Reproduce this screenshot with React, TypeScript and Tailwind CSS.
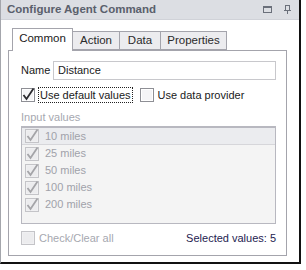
import React from "react"

const values = ["10 miles", "25 miles", "50 miles", "100 miles", "200 miles"]

function CheckBox({ checked, disabled }: { checked: boolean; disabled?: boolean }) {
  const border = disabled ? "#c4c4c8" : "#8e8f95"
  const mark = disabled ? "#a4a4a8" : "#2a2a2e"
  return (
    <svg width="14" height="14" viewBox="0 0 14 14" className="shrink-0 overflow-visible">
      <rect x="0.5" y="0.5" width="13" height="13" fill={disabled ? "#f0f0f2" : "#ffffff"} stroke={border} />
      <rect x="2" y="2" width="10" height="10" fill={disabled ? "#ececee" : "#f4f4f6"} />
      {checked && (
        <path d="M2.5 7 L5.5 11 L12.5 0.5" fill="none" stroke={mark} strokeWidth="1.8" strokeLinejoin="miter" />
      )}
    </svg>
  )
}

export default function App() {
  return (
    <div className="w-[306px] h-[270px] bg-white" style={{ fontFamily: "'Liberation Sans', Arial, sans-serif" }}>
      <div className="w-[301px] h-[264px] flex flex-col bg-white border-l border-[#a4a6ac] border-r-2 border-b-2 border-r-[#111] border-b-[#111]">
        {/* title bar */}
        <div className="h-[20px] bg-[#dcdee3] flex items-center pl-[6px] pr-[8px] border-b border-[#d0d2d8]">
          <span className="text-[11.5px] font-bold text-[#5a606c]">
            Configure Agent Command
          </span>
          <div className="ml-auto flex items-center gap-[12px]">
            <svg width="9" height="7" viewBox="0 0 9 7">
              <rect x="0.5" y="0.5" width="8" height="6" fill="none" stroke="#6a6f7a" />
              <rect x="0" y="0" width="9" height="2" fill="#6a6f7a" />
            </svg>
            <svg width="7" height="9" viewBox="0 0 7 9">
              <rect x="1.5" y="0.5" width="4" height="5" fill="none" stroke="#6a6f7a" />
              <rect x="0" y="5" width="7" height="1" fill="#6a6f7a" />
              <rect x="3" y="6" width="1" height="3" fill="#6a6f7a" />
            </svg>
          </div>
        </div>

        <div className="pt-[8px] pl-[7px] text-[11px] text-[#1a1a1a]">
          {/* tabs */}
          <div className="flex items-end h-[22px] pl-[4px] relative z-10">
            <div className="h-[23px] w-[61px] bg-white border border-b-0 border-[#a4a4ac] flex items-center justify-center pb-[2px] -mb-px text-[11.5px]">
              Common
            </div>
            <div className="h-[19px] w-[47px] bg-[#ececef] border border-l-0 border-[#a4a4ac] flex items-center justify-center text-[#2a2a2a] text-[11.5px]">
              Action
            </div>
            <div className="h-[19px] w-[41px] bg-[#ececef] border border-l-0 border-[#a4a4ac] flex items-center justify-center text-[#2a2a2a] text-[11.5px]">
              Data
            </div>
            <div className="h-[19px] w-[66px] bg-[#ececef] border border-l-0 border-[#a4a4ac] flex items-center justify-center text-[#2a2a2a] text-[11.5px]">
              Properties
            </div>
          </div>

          {/* panel */}
          <div className="w-[279px] h-[206px] border border-[#a4a4ac] bg-white pl-[12px] pr-[10px] pt-[10px] flex flex-col">
            <div className="flex items-center h-[19px]">
              <span className="w-[32px]">Name</span>
              <div className="flex-1 h-[19px] border border-[#c8c8cc] flex items-center pl-[4px]">Distance</div>
            </div>

            <div className="flex items-center h-[14px] mt-[8px]">
              <CheckBox checked />
              <span className="ml-[3px] px-[1px] border border-dotted border-[#222] leading-[14px]">Use default values</span>
              <span className="ml-[7px]"><CheckBox checked={false} /></span>
              <span className="ml-[4px]">Use data provider</span>
            </div>

            <div className="mt-[8px] h-[14px] leading-[14px] text-[#a6a8b0]">Input values</div>

            <div className="mt-[2px] h-[98px] border border-t-2 border-[#b8b8c0] bg-[#f4f4f4] flex flex-col">
              {values.map((v, i) => (
                <div
                  key={v}
                  className={`h-[17px] flex items-center pl-[3px] gap-[6px] text-[#a0a2aa] ${i === 0 ? "bg-[#ebecef] border-b border-[#d6d6da]" : ""}`}
                >
                  <CheckBox checked disabled />
                  <span>{v}</span>
                </div>
              ))}
            </div>

            <div className="flex items-center mt-[7px] h-[14px]">
              <CheckBox checked={false} disabled />
              <span className="ml-[4px] text-[#a6a8b0]">Check/Clear all</span>
              <span className="ml-auto text-[#1e2250]">Selected values: 5</span>
            </div>
          </div>
        </div>
      </div>
    </div>
  )
}
